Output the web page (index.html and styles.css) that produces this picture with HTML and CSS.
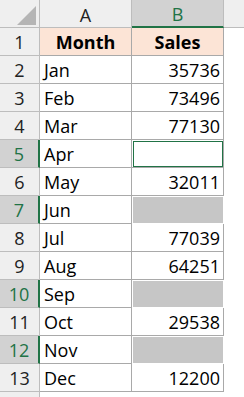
FILE: index.html
```html
<!DOCTYPE html>
<html lang="en">
<head>
    <meta charset="UTF-8">
    <meta name="viewport" content="width=device-width, initial-scale=1.0">
    <title>Sales sheet</title>
    <link rel="stylesheet" href="styles.css">
</head>
<body>

<div class="sheet">
    <!-- column headers -->
    <div class="corner">
        <svg width="19" height="19" viewBox="0 0 19 19"><polygon points="0,19 19,19 19,0" fill="#b5b5b5"/></svg>
    </div>
    <div class="col-head">A</div>
    <div class="col-head picked">B</div>
    <div class="col-head"></div>

    <div class="row-head">1</div>
    <div class="cell title">Month</div>
    <div class="cell title">Sales</div>
    <div class="cell blank"></div>

    <div class="row-head">2</div>
    <div class="cell">Jan</div>
    <div class="cell num">35736</div>
    <div class="cell blank"></div>

    <div class="row-head">3</div>
    <div class="cell">Feb</div>
    <div class="cell num">73496</div>
    <div class="cell blank"></div>

    <div class="row-head">4</div>
    <div class="cell">Mar</div>
    <div class="cell num">77130</div>
    <div class="cell blank"></div>

    <div class="row-head picked">5</div>
    <div class="cell">Apr</div>
    <div class="cell num active"></div>
    <div class="cell blank"></div>

    <div class="row-head">6</div>
    <div class="cell">May</div>
    <div class="cell num">32011</div>
    <div class="cell blank"></div>

    <div class="row-head picked">7</div>
    <div class="cell">Jun</div>
    <div class="cell num selected"></div>
    <div class="cell blank"></div>

    <div class="row-head">8</div>
    <div class="cell">Jul</div>
    <div class="cell num">77039</div>
    <div class="cell blank"></div>

    <div class="row-head">9</div>
    <div class="cell">Aug</div>
    <div class="cell num">64251</div>
    <div class="cell blank"></div>

    <div class="row-head picked">10</div>
    <div class="cell">Sep</div>
    <div class="cell num selected"></div>
    <div class="cell blank"></div>

    <div class="row-head">11</div>
    <div class="cell">Oct</div>
    <div class="cell num">29538</div>
    <div class="cell blank"></div>

    <div class="row-head picked">12</div>
    <div class="cell">Nov</div>
    <div class="cell num selected"></div>
    <div class="cell blank"></div>

    <div class="row-head">13</div>
    <div class="cell">Dec</div>
    <div class="cell num">12200</div>
    <div class="cell blank"></div>

    <div class="row-head"></div>
    <div class="cell blank"></div>
    <div class="cell blank"></div>
    <div class="cell blank"></div>
</div>

</body>
</html>
```

FILE: styles.css
```css
body {
    margin: 0;
    background: #fff;
    font-family: 'Open Sans', 'Liberation Sans', sans-serif;
    font-size: 18px;
    color: #000;
    overflow: hidden;
}
.sheet {
    display: grid;
    grid-template-columns: 40px 92px 92px 1fr;
    grid-auto-rows: 28px;
    width: 244px;
    height: 397px;
    overflow: hidden;
}
.sheet > div {
    box-sizing: border-box;
    border-right: 1px solid #a9a9a9;
    border-bottom: 1px solid #a9a9a9;
    display: flex;
    align-items: flex-end;
    line-height: 20px;
    padding-bottom: 3px;
    white-space: nowrap;
}
.corner {
    background: #efefef;
    justify-content: flex-end;
    padding: 0 3px 2px 0 !important;
    border-color: #bdbdbd !important;
}
.corner svg {
    display: block;
}
.col-head {
    background: #efefef;
    justify-content: center;
    color: #222;
    border-color: #bdbdbd !important;
    padding-bottom: 2px !important;
}
.col-head:nth-child(4) {
    border-right: none !important;
}
.col-head.picked {
    background: #d2d2d2;
    color: #217346;
    border-bottom: 2px solid #217346 !important;
}
.row-head {
    background: #efefef;
    justify-content: center;
    color: #222;
    border-color: #bdbdbd !important;
}
.row-head.picked {
    background: #d2d2d2;
    color: #217346;
    border-right: 2px solid #217346 !important;
}
.cell {
    padding-left: 4px;
}
.cell.num {
    justify-content: flex-end;
    padding-left: 0;
    padding-right: 3px;
}
.cell.title {
    background: #fce4d6;
    font-weight: bold;
    justify-content: center;
    padding-left: 0;
}
.cell.blank {
    border-right: none !important;
    border-bottom: none !important;
}
.cell.active {
    outline: 1px solid #217346;
    outline-offset: -2px;
}
.cell.selected {
    background: #c6c6c6;
    outline: 1px solid #fff;
    outline-offset: -1px;
}
```
